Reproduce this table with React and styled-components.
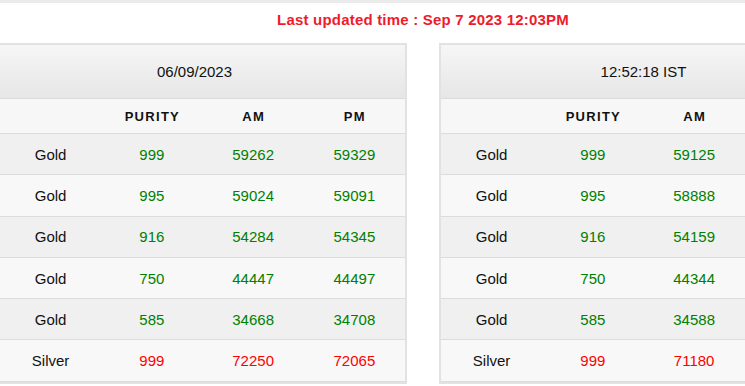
import React from 'react';
import styled, { createGlobalStyle } from 'styled-components';

const GlobalStyle = createGlobalStyle`
  html, body {
    margin: 0;
    padding: 0;
    background: #fff;
    overflow: hidden;
  }
  body {
    font-family: "Liberation Sans", Arial, sans-serif;
    color: #222;
  }
`;

const leftRates = [
  { metal: 'Gold', purity: '999', am: '59262', pm: '59329' },
  { metal: 'Gold', purity: '995', am: '59024', pm: '59091' },
  { metal: 'Gold', purity: '916', am: '54284', pm: '54345' },
  { metal: 'Gold', purity: '750', am: '44447', pm: '44497' },
  { metal: 'Gold', purity: '585', am: '34668', pm: '34708' },
  { metal: 'Silver', purity: '999', am: '72250', pm: '72065' }
];

const rightRates = [
  { metal: 'Gold', purity: '999', am: '59125' },
  { metal: 'Gold', purity: '995', am: '58888' },
  { metal: 'Gold', purity: '916', am: '54159' },
  { metal: 'Gold', purity: '750', am: '44344' },
  { metal: 'Gold', purity: '585', am: '34588' },
  { metal: 'Silver', purity: '999', am: '71180' }
];

const RateTable = ({ title, shift, rows, showPm }) => (
  <Panel>
    <DateBar $shift={shift}>{title}</DateBar>
    <HeadRow>
      <HeadCell />
      <HeadCell>PURITY</HeadCell>
      <HeadCell>AM</HeadCell>
      <HeadCell>{showPm ? 'PM' : null}</HeadCell>
    </HeadRow>
    {rows.map((r, i) => {
      const tone = r.metal === 'Silver' ? 'red' : 'green';
      return (
        <Row key={i} $odd={i % 2 === 0}>
          <Cell>{r.metal}</Cell>
          <Cell $tone={tone}>{r.purity}</Cell>
          <Cell $tone={tone}>{r.am}</Cell>
          <Cell $tone={tone}>{showPm ? r.pm : null}</Cell>
        </Row>
      );
    })}
  </Panel>
);

const App = () => (
  <>
    <GlobalStyle />
    <TopStrip />
    <Wrapper>
      <Updated>Last updated time : Sep 7 2023 12:03PM</Updated>
      <Tables>
        <RateTable title="06/09/2023" shift={16} rows={leftRates} showPm />
        <RateTable title="12:52:18 IST" shift={0} rows={rightRates} />
      </Tables>
    </Wrapper>
  </>
);

export default App;

const TopStrip = styled.div`
  height: 3px;
  background: #ebebeb;
`;

const Wrapper = styled.div`
  width: 850px;
  margin-left: -2px;
`;

const Updated = styled.div`
  padding-top: 8px;
  text-align: center;
  color: #ee1c2b;
  font-size: 15px;
  font-weight: bold;
  letter-spacing: 0.2px;
  line-height: 18px;
`;

const Tables = styled.div`
  display: grid;
  grid-template-columns: 409px 409px;
  column-gap: 32px;
  margin-top: 14px;
`;

const Panel = styled.div`
  border: 2px solid #e2e2e2;
  background: #f7f7f7;
`;

const DateBar = styled.div`
  height: 53px;
  display: flex;
  align-items: center;
  justify-content: center;
  padding-right: ${(p) => p.$shift}px;
  background: linear-gradient(to bottom, #f6f6f6, #e6e6e6);
  border-bottom: 1px solid #dcdcdc;
  font-size: 15px;
  color: #111;
`;

const HeadRow = styled.div`
  display: grid;
  grid-template-columns: repeat(4, 1fr);
  height: 34px;
  background: #f7f7f7;
  border-bottom: 1px solid #dcdcdc;
`;

const HeadCell = styled.div`
  display: flex;
  align-items: center;
  justify-content: center;
  font-size: 13px;
  font-weight: bold;
  letter-spacing: 1.3px;
  color: #111;
  padding-left: 1px;
`;

const Row = styled.div`
  display: grid;
  grid-template-columns: repeat(4, 1fr);
  height: 40.3px;
  background: ${(p) => (p.$odd ? '#f0f0f0' : '#f8f8f8')};
  border-bottom: 1px solid #dcdcdc;
`;

const toneColors = {
  green: '#008000',
  red: '#ff0000'
};

const Cell = styled.div`
  display: flex;
  align-items: center;
  justify-content: center;
  font-size: 15px;
  color: ${(p) => (p.$tone ? toneColors[p.$tone] : '#111')};
`;
